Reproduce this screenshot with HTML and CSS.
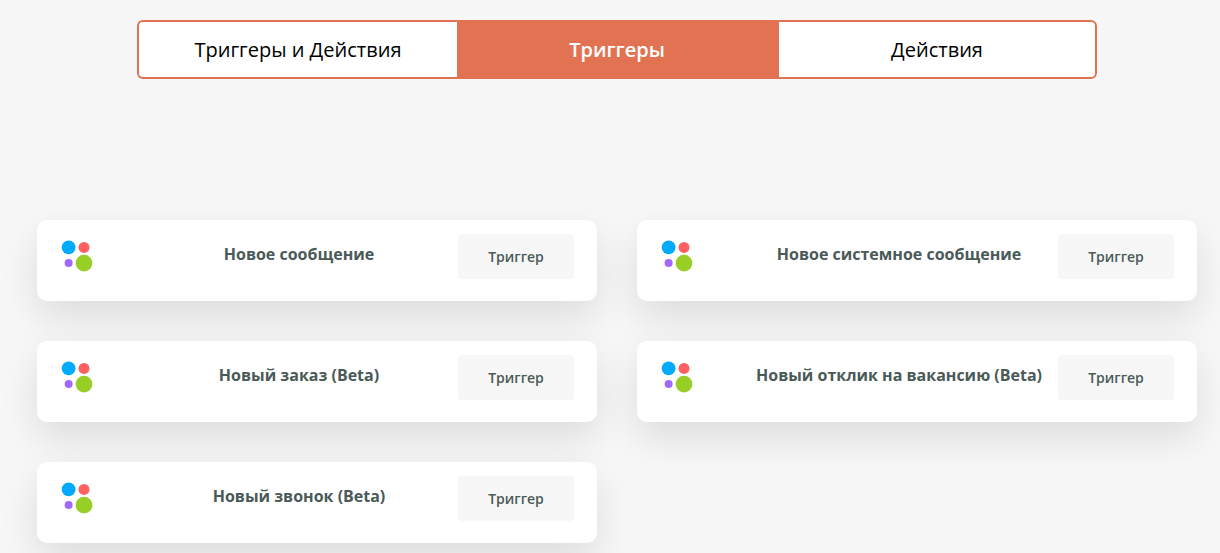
FILE: index.html
```
<!DOCTYPE html>
<html lang="ru">
<head>
    <meta charset="UTF-8">
    <meta name="viewport" content="width=device-width, initial-scale=1.0">
    <title>Триггеры и Действия</title>
    <link rel="stylesheet" href="styles.css">
</head>
<body>
    <!-- Shared logo -->
    <svg class="symbols" width="0" height="0" aria-hidden="true">
        <symbol id="logo" viewBox="0 0 34 34">
            <circle cx="8.6" cy="7.4" r="6.9" fill="#00aaff"/>
            <circle cx="24" cy="7.4" r="5.5" fill="#ff6163"/>
            <circle cx="8.6" cy="23.1" r="4" fill="#a169f7"/>
            <circle cx="24" cy="23.1" r="8.4" fill="#97cf26"/>
        </symbol>
    </svg>

    <div class="container">
        <nav class="tabs">
            <button type="button" class="tab">Триггеры и Действия</button>
            <button type="button" class="tab active">Триггеры</button>
            <button type="button" class="tab">Действия</button>
        </nav>

        <main class="cards">
            <div class="card">
                <svg class="card-logo" aria-hidden="true"><use href="#logo"/></svg>
                <h3>Новое сообщение</h3>
                <button type="button" class="card-btn">Триггер</button>
            </div>
            <div class="card">
                <svg class="card-logo" aria-hidden="true"><use href="#logo"/></svg>
                <h3>Новое системное сообщение</h3>
                <button type="button" class="card-btn">Триггер</button>
            </div>
            <div class="card">
                <svg class="card-logo" aria-hidden="true"><use href="#logo"/></svg>
                <h3>Новый заказ (Beta)</h3>
                <button type="button" class="card-btn">Триггер</button>
            </div>
            <div class="card">
                <svg class="card-logo" aria-hidden="true"><use href="#logo"/></svg>
                <h3>Новый отклик на вакансию (Beta)</h3>
                <button type="button" class="card-btn">Триггер</button>
            </div>
            <div class="card">
                <svg class="card-logo" aria-hidden="true"><use href="#logo"/></svg>
                <h3>Новый звонок (Beta)</h3>
                <button type="button" class="card-btn">Триггер</button>
            </div>
        </main>
    </div>
</body>
</html>
```

FILE: styles.css
```
* {
    margin: 0;
    padding: 0;
    box-sizing: border-box;
    font-family: "Open Sans", "Noto Sans", sans-serif;
}

body {
    background: #f7f7f7;
}

.symbols {
    display: block;
}

.container {
    padding: 20px 23px 10px 37px;
}

/* Tabs */
.tabs {
    display: grid;
    grid-template-columns: repeat(3, 1fr);
    max-width: 960px;
    margin: 0 auto 141px;
}

.tab {
    padding: 14px 10px;
    background: #fff;
    color: #000;
    border: 2px solid #e27352;
    font-size: 20px;
    line-height: 27px;
    cursor: pointer;
}

.tab:first-child {
    border-right: none;
    border-radius: 6px 0 0 6px;
}

.tab:last-child {
    border-radius: 0 6px 6px 0;
}

.tab.active {
    background: #e27352;
    color: #fff;
    font-weight: 600;
}

/* Cards */
.cards {
    display: grid;
    grid-template-columns: repeat(auto-fit, minmax(400px, 1fr));
    gap: 40px;
}

.card {
    display: grid;
    grid-template-columns: 80px 1fr 116px;
    align-items: start;
    padding: 14px 23px 22px;
    background: #fff;
    border-radius: 10px;
    box-shadow: 0 16px 38px rgba(0, 0, 0, 0.11);
}

.card-logo {
    width: 34px;
    height: 34px;
    margin-top: 6px;
}

.card h3 {
    margin-top: 8px;
    color: #4a5a57;
    font-size: 16px;
    line-height: 24px;
    text-align: center;
}

.card-btn {
    padding: 12px 10px;
    background: #f7f7f7;
    color: #4a5a57;
    border: none;
    border-radius: 4px;
    font-size: 14px;
    font-weight: 600;
    line-height: 21px;
    cursor: pointer;
}
```
